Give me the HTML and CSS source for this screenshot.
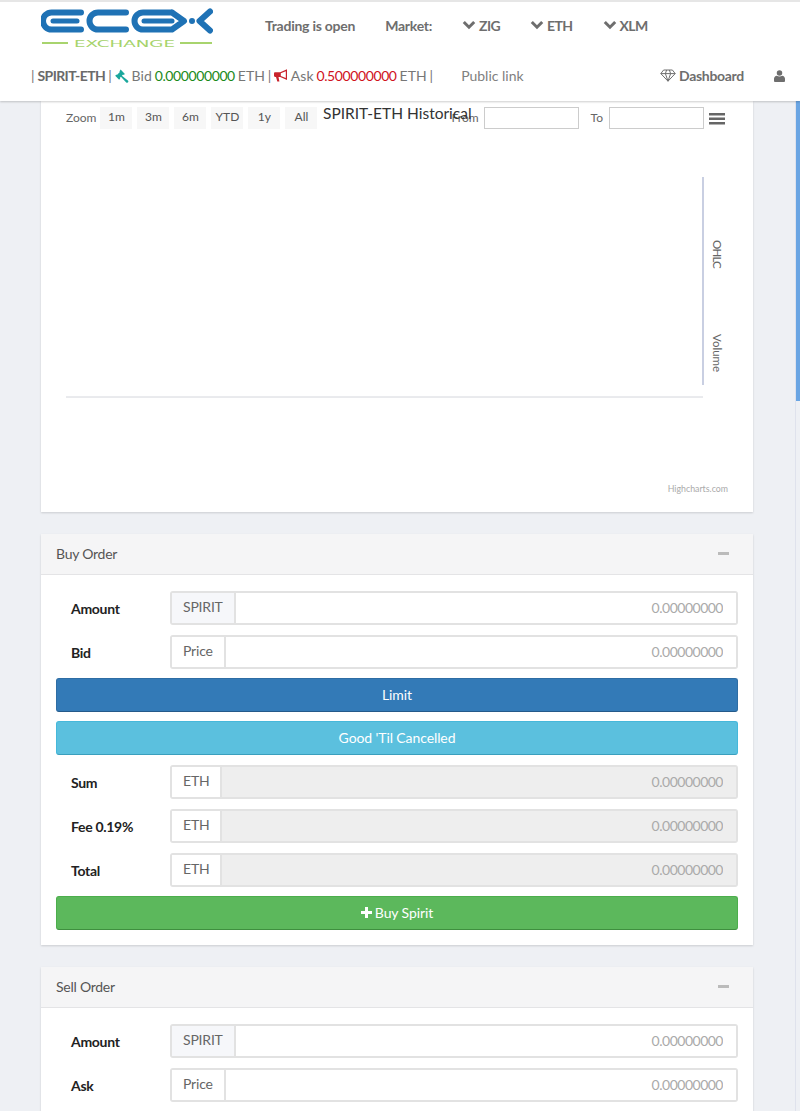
FILE: index.html
```html
<!DOCTYPE html>
<html lang="en">
<head>
<meta charset="utf-8">
<title>SPIRIT-ETH</title>
<link rel="stylesheet" href="styles.css">
</head>
<body>
<div class="page">
  <header class="topbar">
    <div class="nav-row">
      <svg class="logo" viewBox="0 0 172 40" width="172" height="40" aria-label="ECEX Exchange">
        <g class="logo-blue">
          <path d="M40 4.5H10.5a8.5 8.5 0 0 0 0 17H40"/>
          <path class="logo-bar" d="M12 13H36"/>
          <path d="M85 4.5H57a8.5 8.5 0 0 0 0 17H85"/>
          <path d="M131 4.5H102a8.5 8.5 0 0 0 0 17H131L143 13L131 4.5"/>
          <path class="logo-bar" d="M103 13H131"/>
          <path d="M169 3.5L158.5 13L169 22.5"/>
        </g>
        <circle class="logo-dot" cx="151" cy="13" r="3"/>
        <path class="logo-line" d="M1 35H27M139 35H171"/>
        <text class="logo-word" x="33" y="38.5" textLength="101" lengthAdjust="spacingAndGlyphs">EXCHANGE</text>
      </svg>
      <nav class="market-nav">
        <span class="nav-item">Trading is open</span>
        <span class="nav-item">Market:</span>
        <span class="nav-item mkt"><svg class="chev" viewBox="0 0 14 10"><path d="M1.8 2L7 7.2L12.2 2"/></svg>ZIG</span>
        <span class="nav-item mkt"><svg class="chev" viewBox="0 0 14 10"><path d="M1.8 2L7 7.2L12.2 2"/></svg>ETH</span>
        <span class="nav-item mkt"><svg class="chev" viewBox="0 0 14 10"><path d="M1.8 2L7 7.2L12.2 2"/></svg>XLM</span>
      </nav>
    </div>
    <div class="ticker-row">
      <div class="ticker">
        | <b class="pair">SPIRIT-ETH</b> |
        <svg class="ico-gavel" viewBox="0 0 14 14"><path d="M5.6 .6L9.9 4.9L8.7 6.1L8.1 5.6L6.9 6.8L12.9 11.4C13.7 12 13.4 13.2 12.7 13.6C12.2 13.9 11.6 13.8 11.2 13.4L5.9 7.8L4.8 9L5.3 9.5L4.1 10.7L.2 6.8L1.4 5.6L1.9 6.1L4.9 3.1L4.4 2.6Z"/></svg>
        Bid <span class="bid">0.000000000</span> ETH |
        <svg class="ico-horn" viewBox="0 0 14 13"><path d="M13 .3L6.2 3.2H1.2C.5 3.2 0 3.8 0 4.4V6.8C0 7.4.5 8 1.2 8H2L3.3 12.6H5.4L4.5 8H6.2L13 10.9V.3ZM11.8 2.2V9L6.8 6.9V4.3Z"/></svg>
        Ask <span class="ask">0.500000000</span> ETH |
      </div>
      <span class="public-link">Public link</span>
      <div class="account">
        <span class="dash"><svg class="ico-gem" viewBox="0 0 16 13"><path d="M3.6 1H12.4L15.2 4.6L8 12.2L.8 4.6ZM.8 4.6H15.2M5.4 4.6L8 12.2L10.6 4.6M5.4 4.6L6.6 1M10.6 4.6L9.4 1"/></svg>Dashboard</span>
        <svg class="ico-user" viewBox="0 0 12 13"><circle cx="6" cy="3.3" r="3"/><path d="M0 12V9.6C0 7.6 1.4 6.4 3 6.2C4.8 7.4 7.2 7.4 9 6.2C10.6 6.4 12 7.6 12 9.6V12C12 12.6 11.6 13 11 13H1C.4 13 0 12.6 0 12Z"/></svg>
      </div>
    </div>
  </header>

  <main class="content">
    <section class="chart-card">
      <div class="range-bar">
        <span class="range-label">Zoom</span>
        <div class="range-buttons">
          <span class="range-btn">1m</span><span class="range-btn">3m</span><span class="range-btn">6m</span><span class="range-btn">YTD</span><span class="range-btn">1y</span><span class="range-btn">All</span>
        </div>
        <div class="range-dates">
          <span class="range-label">From</span><span class="date-box"></span>
          <span class="range-label to-label">To</span><span class="date-box"></span>
          <svg class="ico-menu" viewBox="0 0 16 12"><path d="M0 0H16V2.6H0ZM0 4.5H16V7.1H0ZM0 9H16V11.6H0Z"/></svg>
        </div>
      </div>
      <h2 class="chart-title">SPIRIT-ETH Historical</h2>
      <svg class="plot" viewBox="0 0 712 371" width="712" height="371">
        <line class="axis-v" x1="662" y1="36" x2="662" y2="244"/>
        <line class="axis-h" x1="25" y1="256" x2="662" y2="256"/>
        <text class="axis-title tight" transform="translate(672 99) rotate(90)">OHLC</text>
        <text class="axis-title" transform="translate(672 193) rotate(90)">Volume</text>
        <text class="credits" x="687" y="351" text-anchor="end">Highcharts.com</text>
      </svg>
    </section>

    <section class="panel">
      <div class="panel-head"><span>Buy Order</span><i class="minus"></i></div>
      <div class="panel-body">
        <div class="row"><label>Amount</label><div class="group"><span class="addon tint">SPIRIT</span><input placeholder="0.00000000"></div></div>
        <div class="row"><label>Bid</label><div class="group"><span class="addon">Price</span><input placeholder="0.00000000"></div></div>
        <button class="btn btn-blue">Limit</button>
        <button class="btn btn-cyan">Good 'Til Cancelled</button>
        <div class="row"><label>Sum</label><div class="group off"><span class="addon">ETH</span><input disabled placeholder="0.00000000"></div></div>
        <div class="row"><label>Fee 0.19%</label><div class="group off"><span class="addon">ETH</span><input disabled placeholder="0.00000000"></div></div>
        <div class="row"><label>Total</label><div class="group off"><span class="addon">ETH</span><input disabled placeholder="0.00000000"></div></div>
        <button class="btn btn-green"><svg class="ico-plus" viewBox="0 0 11 11"><path d="M4 0H7V4H11V7H7V11H4V7H0V4H4Z"/></svg>Buy Spirit</button>
      </div>
    </section>

    <section class="panel">
      <div class="panel-head"><span>Sell Order</span><i class="minus"></i></div>
      <div class="panel-body">
        <div class="row"><label>Amount</label><div class="group"><span class="addon tint">SPIRIT</span><input placeholder="0.00000000"></div></div>
        <div class="row"><label>Ask</label><div class="group"><span class="addon">Price</span><input placeholder="0.00000000"></div></div>
      </div>
    </section>
  </main>
  <div class="scroll-thumb"></div>
</div>
</body>
</html>
```
FILE: styles.css
```css
* { box-sizing: border-box; }
html, body { margin: 0; padding: 0; }
body {
  font-family: "Lato", "Liberation Sans", sans-serif;
  font-size: 14px;
  color: #666;
  background: #eef0f4;
}
.page {
  position: relative;
  height: 1111px;
  overflow: hidden;
}
.topbar {
  height: 101px;
  background: #fff;
  border-top: 2px solid #e6e6e6;
  box-shadow: 0 1px 2px rgba(0,0,0,.2);
  position: relative;
  z-index: 2;
}
.nav-row {
  height: 48px;
  padding-left: 41px;
  display: flex;
  align-items: center;
  color: #6e6e6e;
}
.logo { margin-top: 4px; flex: none; }
.logo-blue path { fill: none; stroke: #1f72b5; stroke-width: 6; stroke-linecap: round; stroke-linejoin: round; }
.logo-blue .logo-bar { stroke-width: 5; }
.logo-dot { fill: #1f72b5; }
.logo-line { stroke: #8cc63f; stroke-width: 1.6; fill: none; }
.logo-word { font-size: 9px; fill: #a6d36b; font-family: "DejaVu Sans", sans-serif; }
.market-nav {
  margin-left: 52px;
  padding-bottom: 2px;
  display: flex;
  gap: 30px;
  font-weight: 700;
  letter-spacing: -.25px;
}
.nav-item { display: inline-flex; align-items: center; white-space: nowrap; }
.nav-item.mkt { letter-spacing: -.6px; }
.chev { width: 14px; height: 10px; margin: 0 3px 0 0; }
.chev path { fill: none; stroke: #6e6e6e; stroke-width: 3; }
.ticker-row {
  height: 51px;
  padding: 0 15px 0 31px;
  display: flex;
  align-items: center;
  white-space: nowrap;
  color: #777;
}
.ticker { display: block; word-spacing: -.6px; }
.pair { color: #6a6a6a; letter-spacing: -.6px; }
.ico-gavel { width: 14px; height: 14px; vertical-align: -2px; fill: #1aa79c; }
.ico-horn { width: 14px; height: 13px; vertical-align: -1px; fill: #c8232c; }
.bid { color: #1a8a1a; letter-spacing: -.4px; }
.ask { color: #d0121b; letter-spacing: -.4px; }
.public-link { margin-left: 28px; color: #808080; }
.account { margin-left: auto; display: flex; align-items: center; gap: 30px; font-weight: 700; color: #6e6e6e; letter-spacing: -.3px; }
.dash { display: inline-flex; align-items: center; }
.ico-gem { width: 16px; height: 13px; margin-right: 3px; fill: none; stroke: #6e6e6e; stroke-width: 1; }
.ico-user { width: 11px; height: 12px; fill: #6e6e6e; }
.content {
  padding: 0 47px 0 41px;
}
.chart-card {
  position: relative;
  background: #fff;
  height: 411px;
  box-shadow: 0 1px 2px rgba(0,0,0,.15);
  margin-bottom: 22px;
}
.range-bar {
  height: 40px;
  padding: 6px 28px 0 25px;
  display: flex;
  align-items: flex-start;
  font-size: 12px;
}
.range-label { line-height: 22px; color: #666; }
.range-buttons { display: flex; gap: 5px; margin-left: 4px; }
.range-btn {
  width: 32px;
  height: 22px;
  line-height: 20px;
  text-align: center;
  background: #f7f7f7;
  color: #555;
}
.range-dates { margin-left: auto; display: flex; align-items: flex-start; }
.range-dates .range-label { margin-right: 5px; }
.range-dates .to-label { margin-left: 12px; margin-right: 6px; }
.date-box { width: 95px; height: 22px; border: 1px solid #ccc; background: #fff; }
.ico-menu { width: 16px; height: 12px; margin: 6px 0 0 5px; fill: #666; }
.chart-title {
  position: absolute;
  left: 282px;
  top: 2px;
  margin: 0;
  font-size: 15.5px;
  line-height: 20px;
  font-weight: 400;
  color: #333;
  white-space: nowrap;
}
.plot { display: block; }
.axis-v { stroke: #c9cfe2; stroke-width: 2; }
.axis-h { stroke: #d4d6dc; stroke-width: 1; }
.axis-title { font-size: 11.5px; fill: #666; }
.axis-title.tight { letter-spacing: -.8px; }
.credits { font-size: 8.8px; fill: #aaa; }
.panel {
  background: #fff;
  box-shadow: 0 1px 2px rgba(0,0,0,.15);
  margin-bottom: 22px;
}
.panel-head {
  height: 41px;
  padding: 0 24px 2px 15px;
  display: flex;
  align-items: center;
  justify-content: space-between;
  background: #f5f5f6;
  border-bottom: 1px solid #e4e4e6;
  color: #555;
  letter-spacing: -.25px;
}
.minus { width: 11px; height: 3px; background: #bbb; }
.panel-body { padding: 16px 15px 15px; }
.row {
  display: flex;
  align-items: center;
  height: 34px;
  margin-bottom: 10px;
}
.row label { width: 114px; padding: 0 0 0 15px; font-weight: 700; color: #222; letter-spacing: -.3px; }
.group { flex: 1; display: flex; height: 34px; border: 2px solid #e2e2e2; border-radius: 3px; }
.addon {
  padding: 0 11px;
  line-height: 27px;
  background: #fff;
  border-right: 2px solid #e2e2e2;
  color: #666;
  letter-spacing: -.2px;
}
.addon.tint { background: #f6f7fa; }
.group input {
  flex: 1;
  min-width: 0;
  border: 0;
  padding: 0 13px 2px 0;
  text-align: right;
  font: inherit;
  letter-spacing: -.5px;
  background: #fff;
  outline: 0;
}
.group input::placeholder { color: #aaa; opacity: 1; }
.group.off input { background: #eee; }
.btn {
  display: flex;
  align-items: center;
  justify-content: center;
  width: 100%;
  height: 34px;
  margin: -1px 0 10px;
  padding: 0 0 2px;
  border: 1px solid;
  border-radius: 3px;
  color: #fff;
  font: inherit;
  letter-spacing: -.1px;
}
.btn-blue { background: #337ab7; border-color: #2e6da4; border-bottom-color: #245a8a; }
.btn-cyan { background: #5bc0de; border-color: #46b8da; border-bottom-color: #3a9fbd; }
.btn-green { background: #5cb85c; border-color: #4cae4c; border-bottom-color: #3f8f3f; margin-bottom: 0; }
.ico-plus { width: 11px; height: 11px; margin-right: 3px; fill: #fff; }
.scroll-thumb {
  position: absolute;
  right: 0;
  top: 101px;
  width: 5px;
  height: 300px;
  background: #6aa5e3;
}
.page::after {
  content: "";
  position: absolute;
  right: 4px;
  top: 101px;
  bottom: 0;
  width: 1px;
  background: #dfe2ec;
}
```
